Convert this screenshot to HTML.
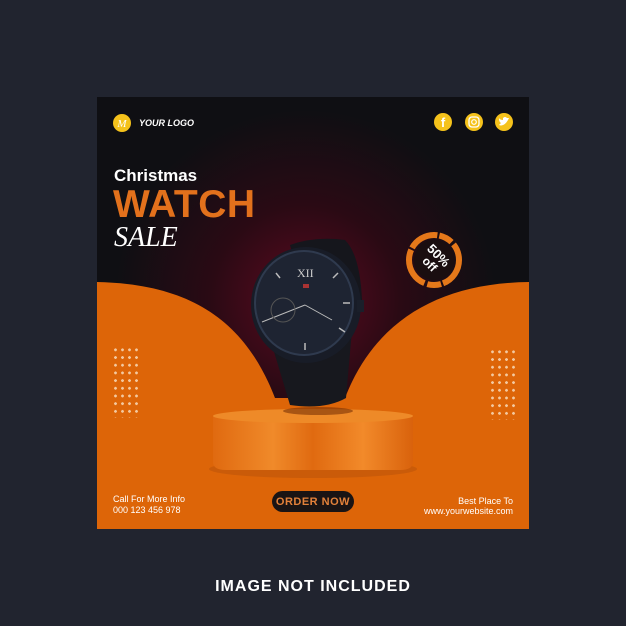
<!DOCTYPE html>
<html><head><meta charset="utf-8"><style>
html,body{margin:0;padding:0}
body{width:626px;height:626px;background:#21242f;position:relative;overflow:hidden;font-family:"Liberation Sans",sans-serif}
.t{position:absolute;white-space:nowrap}
</style></head><body>
<svg width="626" height="626" style="position:absolute;left:0;top:0">
<defs>
<radialGradient id="bg" cx="305" cy="300" r="190" gradientUnits="userSpaceOnUse">
<stop offset="0" stop-color="#5e0a20"/><stop offset="0.5" stop-color="#2a0a14"/><stop offset="1" stop-color="#0f0f13"/></radialGradient>
<linearGradient id="ped" x1="0" x2="1"><stop offset="0" stop-color="#e06a10"/><stop offset="0.3" stop-color="#f08a2a"/><stop offset="0.5" stop-color="#e06a10"/><stop offset="0.75" stop-color="#f28a2a"/><stop offset="1" stop-color="#d9620c"/></linearGradient>
</defs>
<rect x="97" y="97" width="432" height="432" fill="url(#bg)"/>
<path d="M97,282 C190,284 245,320 275,398 L345,398 C375,320 440,283 529,282 L529,529 L97,529 Z" fill="#dd6508"/>
<ellipse cx="313" cy="469" rx="104" ry="9" fill="#b8520a" opacity="0.5"/>
<path d="M213,416 L413,416 L413,462 Q413,470 400,470 L226,470 Q213,470 213,462 Z" fill="url(#ped)"/>
<ellipse cx="313" cy="416" rx="100" ry="7" fill="#ee8a28"/>
<ellipse cx="318" cy="411" rx="35" ry="4" fill="#7a3205" opacity="0.6"/>
<!-- watch -->
<path d="M290,245 Q315,236 345,240 Q360,255 362,300 L350,310 L295,262 Z" fill="#15161c"/>
<path d="M272,345 L352,330 L346,398 Q325,410 290,405 Z" fill="#17181e"/>
<ellipse cx="306" cy="305" rx="55" ry="58" fill="#181c27"/>
<ellipse cx="304" cy="303" rx="49" ry="52" fill="#1e2432" stroke="#2f3a4e" stroke-width="2"/>
<rect x="357" y="300" width="7" height="12" fill="#1a1f2a"/>
<text x="297" y="277" fill="#ccc" font-size="12" font-family="Liberation Serif">XII</text>
<rect x="303" y="284" width="6" height="4" fill="#a33"/>
<line x1="305" y1="305" x2="262" y2="322" stroke="#bbb" stroke-width="1"/>
<line x1="305" y1="305" x2="332" y2="320" stroke="#bbb" stroke-width="1"/>
<circle cx="283" cy="310" r="12" fill="none" stroke="#555" stroke-width="1"/>
<g stroke="#bbb" stroke-width="1.5"><line x1="343" y1="303" x2="350" y2="303"/><line x1="333" y1="278" x2="338" y2="273"/><line x1="339" y1="328" x2="345" y2="332"/><line x1="305" y1="343" x2="305" y2="350"/><line x1="280" y1="278" x2="276" y2="273"/></g>
<!-- 50% badge -->
<circle cx="434" cy="260" r="25" fill="none" stroke="#e5781a" stroke-width="6" stroke-dasharray="30 2 14 3 40 2"/>
<circle cx="434" cy="260" r="20" fill="#1a0e10"/>
<g transform="rotate(45 434 260)" fill="#fff" font-weight="bold" text-anchor="middle">
<text x="434" y="258" font-size="13">50%</text>
<text x="434" y="270" font-size="12">off</text>
</g>
<!-- logo & socials -->
<circle cx="122" cy="123" r="9" fill="#f5c21b"/><text x="122" y="127" fill="#fff" font-size="11" font-style="italic" font-family="Liberation Serif" text-anchor="middle">M</text>
<circle cx="443" cy="122" r="9" fill="#f5c21b"/><text x="443" y="127" fill="#fff" font-size="13" font-weight="bold" text-anchor="middle">f</text>
<circle cx="474" cy="122" r="9" fill="#f5c21b"/><rect x="469" y="117" width="10" height="10" rx="3" fill="none" stroke="#fff" stroke-width="1.3"/><circle cx="474" cy="122" r="2.3" fill="none" stroke="#fff" stroke-width="1.2"/>
<circle cx="504" cy="122" r="9" fill="#f5c21b"/><path d="M499,125 Q504,127 508,120 L509,118 L507,118 Q505,116 503,118 L503,120 Q500,120 499,118 Q499,122 501,123 Q500,124 499,125Z" fill="#fff"/>
<rect x="272" y="491" width="82" height="21" rx="10.5" fill="#1a1414"/>
</svg>
<div class="t" style="left:139px;top:118px;color:#fff;font-size:9px;font-weight:bold;font-style:italic">YOUR LOGO</div>
<div class="t" style="left:114px;top:166px;color:#fff;font-size:17px;font-weight:bold">Christmas</div>
<div class="t" style="left:113px;top:183px;color:#e2711c;font-size:39px;font-weight:bold;letter-spacing:0.5px">WATCH</div>
<div class="t" style="left:114px;top:222px;color:#fff;font-size:28px;font-style:italic;font-family:'Liberation Serif',serif">SALE</div>
<div class="t" style="left:113px;top:494px;color:#fff;font-size:9px;line-height:11px">Call For More Info<br>000 123 456 978</div>
<div class="t" style="left:272px;top:496px;width:82px;text-align:center;color:#e3813a;font-size:11px;font-weight:bold;letter-spacing:0.5px">ORDER NOW</div>
<div class="t" style="right:113px;top:496px;color:#fff;font-size:9px;line-height:10px;text-align:right">Best Place To<br>www.yourwebsite.com</div>
<div class="t" style="left:0;width:626px;top:578px;text-align:center;color:#fff;font-size:16px;font-weight:bold;letter-spacing:1px">IMAGE NOT INCLUDED</div>
<div style="position:absolute;left:112px;top:346px;width:28px;height:72px;background-image:radial-gradient(circle,#f3c9a0 1.3px,transparent 1.5px);background-size:7px 7.7px"></div>
<div style="position:absolute;left:489px;top:348px;width:28px;height:72px;background-image:radial-gradient(circle,#f3c9a0 1.3px,transparent 1.5px);background-size:7px 7.7px"></div>
</body></html>
